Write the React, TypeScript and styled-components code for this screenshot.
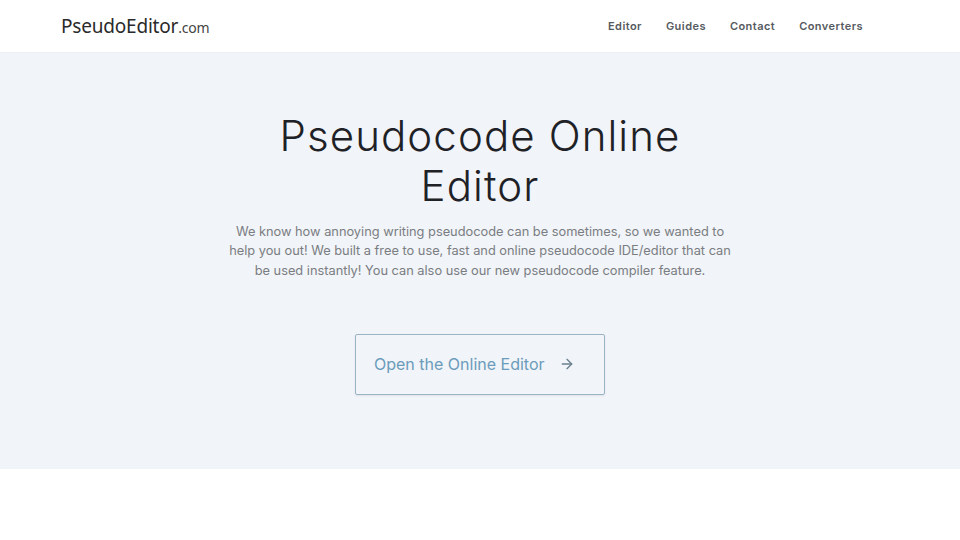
import React from "react";
import styled, { createGlobalStyle } from "styled-components";

const Global = createGlobalStyle`
  html, body { margin: 0; padding: 0; background: #ffffff; }
  body { font-family: "Inter", "Noto Sans", sans-serif; }
  * { box-sizing: border-box; }
`;

const Header = styled.header`
  height: 53px;
  display: flex;
  align-items: center;
  justify-content: space-between;
  padding: 0 97px 0 61px;
  background: #ffffff;
  border-bottom: 1px solid #eef1f4;
`;

const Logo = styled.a`
  font-family: "Noto Sans", "Inter", sans-serif;
  font-size: 19px;
  font-weight: 400;
  color: #2a2a2a;
  text-decoration: none;
  letter-spacing: -0.2px;
  small {
    font-size: 14px;
    color: #444;
  }
`;

const Nav = styled.nav`
  display: flex;
  gap: 24px;
`;

const NavLink = styled.a`
  font-family: "Inter", sans-serif;
  font-size: 11px;
  font-weight: 600;
  color: #555a60;
  letter-spacing: 0.45px;
  text-decoration: none;
`;

const Hero = styled.section`
  background: #f1f4f8;
  height: 416px;
  display: flex;
  flex-direction: column;
  align-items: center;
  padding-top: 58px;
`;

const Title = styled.h1`
  margin: 0;
  font-family: "Inter", sans-serif;
  font-weight: 300;
  font-size: 42px;
  line-height: 50px;
  letter-spacing: 1.1px;
  color: #1e2126;
  text-align: center;
  width: 460px;
`;

const Lead = styled.p`
  margin: 11px 0 0;
  width: 505px;
  font-family: "Inter", sans-serif;
  font-size: 12.8px;
  line-height: 19.3px;
  color: #7a7d82;
  text-align: center;
`;

const Button = styled.a`
  margin-top: 54px;
  width: 250px;
  height: 61px;
  display: flex;
  align-items: center;
  padding-left: 18px;
  gap: 14px;
  border: 1px solid #9bb4c4;
  border-radius: 2px;
  font-family: "Inter", sans-serif;
  font-size: 16px;
  color: #6b9cbc;
  text-decoration: none;
  box-shadow: 0 1px 2px rgba(0, 0, 0, 0.08);
`;

export default function App() {
  return (
    <>
      <Global />
      <Header>
        <Logo href="#">
          PseudoEditor<small>.com</small>
        </Logo>
        <Nav>
          <NavLink href="#">Editor</NavLink>
          <NavLink href="#">Guides</NavLink>
          <NavLink href="#">Contact</NavLink>
          <NavLink href="#">Converters</NavLink>
        </Nav>
      </Header>
      <Hero>
        <Title>Pseudocode Online Editor</Title>
        <Lead>
          We know how annoying writing pseudocode can be sometimes, so we wanted to help you out!
          We built a free to use, fast and online pseudocode IDE/editor that can be used instantly!
          You can also use our new pseudocode compiler feature.
        </Lead>
        <Button href="#">
          Open the Online Editor
          <svg width="16" height="16" viewBox="0 0 24 24" fill="none" stroke="#6b7f8e" strokeWidth="2" strokeLinecap="round" strokeLinejoin="round">
            <path d="M5 12h14" />
            <path d="M12 5l7 7-7 7" />
          </svg>
        </Button>
      </Hero>
    </>
  );
}
